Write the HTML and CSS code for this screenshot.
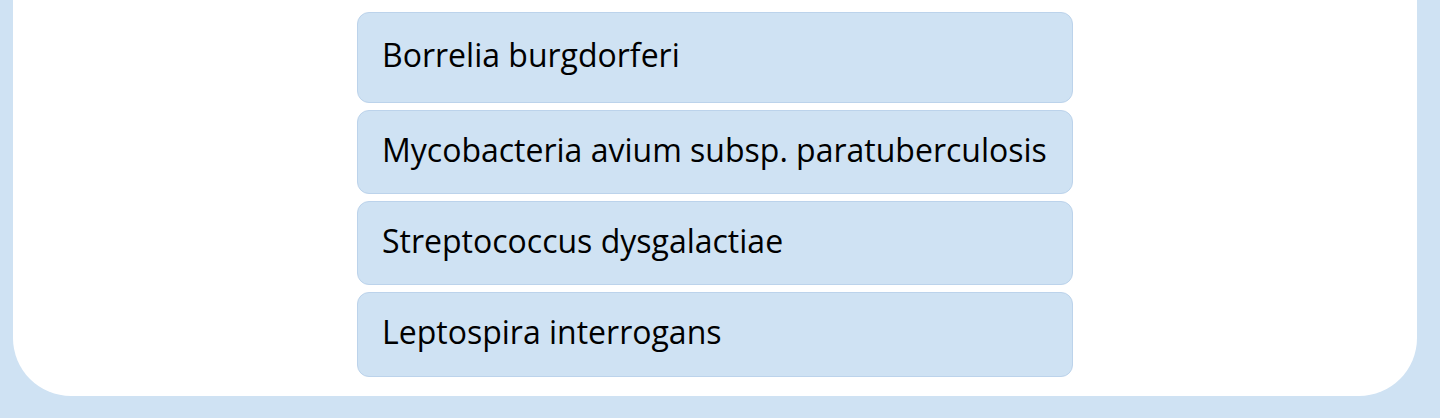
FILE: index.html
```html
<!DOCTYPE html>
<html lang="en">
<head>
    <meta charset="UTF-8">
    <meta name="viewport" content="width=device-width, initial-scale=1.0">
    <title>Pathogen choices</title>
    <link rel="stylesheet" href="styles.css">
</head>
<body>
    <div class="page">
        <div class="card">
            <div class="choices">
                <button class="choice first">Borrelia burgdorferi</button>
                <button class="choice">Mycobacteria avium subsp. paratuberculosis</button>
                <button class="choice">Streptococcus dysgalactiae</button>
                <button class="choice">Leptospira interrogans</button>
            </div>
        </div>
    </div>
</body>
</html>
```

FILE: styles.css
```css
body {
    margin: 0;
    padding: 0;
    background: #cfe2f3;
    font-family: "Open Sans", "Noto Sans", sans-serif;
    overflow: hidden;
}

.page {
    padding: 0 23px 22px 13px;
}

.card {
    background: white;
    border-radius: 0 0 58px 58px;
    padding: 12px 0 19px 0;
}

.choices {
    width: 716px;
    margin: 0 auto;
    display: flex;
    flex-direction: column;
    gap: 7px;
}

.choice {
    height: 84.2px;
    padding: 0 24px 6px 24px;
    border: 1px solid #bcd3eb;
    border-radius: 12px;
    background: #cfe2f3;
    color: black;
    font-family: inherit;
    font-size: 32px;
    font-variant-ligatures: none;
    text-align: left;
    cursor: pointer;
}

.choice.first {
    height: 91px;
    padding-bottom: 6px;
}
```
